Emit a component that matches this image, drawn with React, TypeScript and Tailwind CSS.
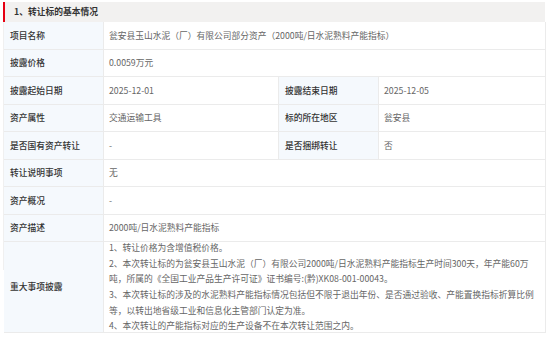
import React from 'react'

const font = { fontFamily: '"Noto Sans CJK SC", "Microsoft YaHei", sans-serif' }

const Label = ({ children, className = '' }: { children: React.ReactNode; className?: string }) => (
  <div className={`flex items-center bg-[#f5f9fd] pl-[6px] font-medium text-[#333] border-b border-r border-[#ebebeb] ${className}`}>
    {children}
  </div>
)

const Value = ({ children, className = '' }: { children: React.ReactNode; className?: string }) => (
  <div className={`flex items-center bg-white pl-[5px] text-[#666] border-b border-r border-[#ebebeb] ${className}`}>
    {children}
  </div>
)

const disclosure = [
  '1、转让价格为含增值税价格。',
  '2、本次转让标的为瓮安县玉山水泥（厂）有限公司2000吨/日水泥熟料产能指标生产时间300天，年产能60万',
  '吨，所属的《全国工业产品生产许可证》证书编号:(黔)XK08-001-00043。',
  '3、本次转让标的涉及的水泥熟料产能指标情况包括但不限于退出年份、是否通过验收、产能置换指标折算比例',
  '等，以转出地省级工业和信息化主管部门认定为准。',
  '4、本次转让的产能指标对应的生产设备不在本次转让范围之内。',
]

export default function App() {
  return (
    <div className="w-[550px] h-[339px] bg-white pt-[2px] pl-[3px] text-[8.75px]" style={font}>
      <div className="w-[542px]">
        {/* section title */}
        <div className="flex items-center h-[20px] bg-[#f2f1f0] border-l-[2px] border-[#e60012] pl-[9px] font-bold text-[#333]">
          1、转让标的基本情况
        </div>

        <div className="grid grid-cols-[100px_175px_100px_167px] auto-rows-[27.5px] border-l border-[#f0f0f0]">
          <Label>项目名称</Label>
          <Value className="col-span-3">瓮安县玉山水泥（厂）有限公司部分资产（2000吨/日水泥熟料产能指标）</Value>

          <Label>披露价格</Label>
          <Value className="col-span-3">0.0059万元</Value>

          <Label>披露起始日期</Label>
          <Value>2025-12-01</Value>
          <Label>披露结束日期</Label>
          <Value>2025-12-05</Value>

          <Label>资产属性</Label>
          <Value>交通运输工具</Value>
          <Label>标的所在地区</Label>
          <Value>瓮安县</Value>

          <Label>是否国有资产转让</Label>
          <Value>-</Value>
          <Label>是否捆绑转让</Label>
          <Value>否</Value>

          <Label>转让说明事项</Label>
          <Value className="col-span-3">无</Value>

          <Label>资产概况</Label>
          <Value className="col-span-3">-</Value>

          <Label>资产描述</Label>
          <Value className="col-span-3">2000吨/日水泥熟料产能指标</Value>

          <Label className="h-[91px]">重大事项披露</Label>
          <Value className="col-span-3 h-[91px]">
            <div className="leading-[15.6px]">
              {disclosure.map((line) => (
                <div key={line} className="whitespace-nowrap">{line}</div>
              ))}
            </div>
          </Value>
        </div>
      </div>
    </div>
  )
}
